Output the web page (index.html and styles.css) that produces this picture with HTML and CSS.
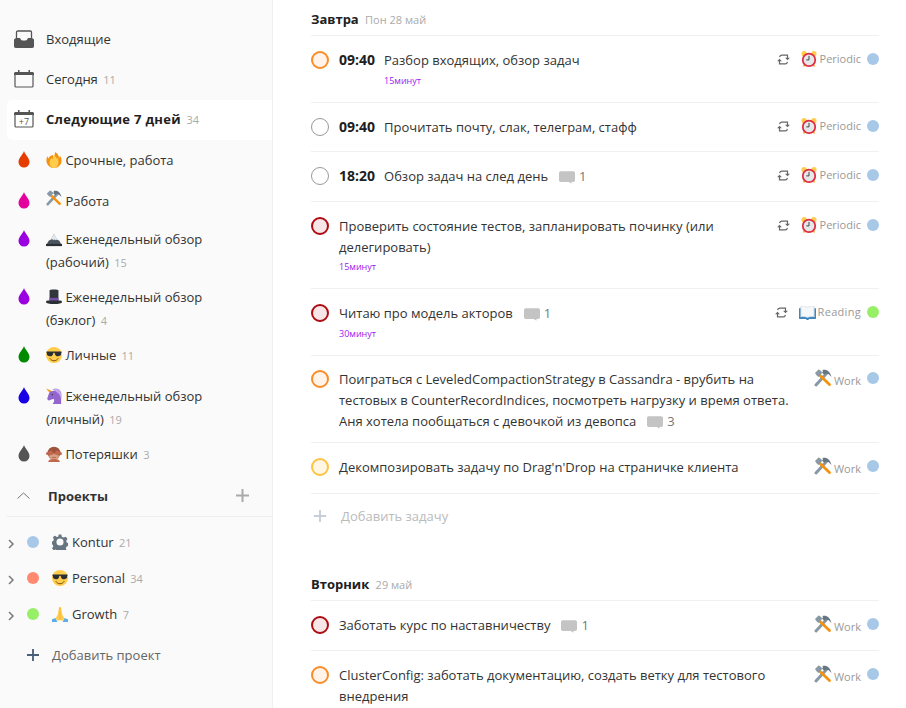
FILE: index.html
```html
<!DOCTYPE html>
<html lang="en">
  <head>
    <meta charset="UTF-8" />
    <meta name="viewport" content="width=device-width, initial-scale=1.0" />
    <title>Tasks</title>
    <link rel="stylesheet" href="styles.css">
  </head>
  <body>
    <svg class="sprite" xmlns="http://www.w3.org/2000/svg">
      <symbol id="i-inbox" viewBox="0 0 20 18"><path d="M2.500 9V2.200C2.500 1.500 3 1 3.700 1h12.600c.7 0 1.200.5 1.200 1.200V9" fill="none" stroke="#555" stroke-width="1.300"/><path d="M0 9.500 2 8h3.500c.5 0 .8.3 1 .8.4 1 1 1.700 1.800 1.700h3.400c.8 0 1.400-.7 1.800-1.700.2-.5.5-.8 1-.8H18l2 1.500v6.800c0 .9-.7 1.700-1.700 1.700H1.700C.8 18 0 17.200 0 16.300z" fill="#555"/></symbol>
      <symbol id="i-cal" viewBox="0 0 20 18"><path d="M1 5v11c0 .6.400 1 1 1h16c.6 0 1-.4 1-1V5" fill="none" stroke="#555" stroke-width="1.200"/><path d="M0 3.500C0 2.700.7 2 1.500 2H4V0h1.500v2h9V0H16v2h2.500c.8 0 1.500.7 1.500 1.500V5H0z" fill="#555"/></symbol>
      <symbol id="i-drop" viewBox="0 0 12 17"><path d="M6 0c.8 3.500 5.500 6.500 5.500 11A5.500 5.500 0 0 1 .5 11C.5 6.500 5.200 3.500 6 0z"/></symbol>
      <symbol id="i-flame" viewBox="0 0 36 36"><path d="M35 19c0-2-.5-4.500-1.500-6.500-1.500-2.500-2-4.500-2-4.500-1 2-1 4-2 5.500C29 7 25 2 20 0c1 5-1.500 8-3.500 11-1-1.500-1.500-3-1.500-5C9 9 6 12 5 15 4 13 3.500 11 4 9 1.500 11.500 1 16 1 19c0 9.400 7.600 17 17 17s17-7.600 17-17z" fill="#F4900C"/><path d="M28 24c0 6-4.500 12-10 12S8 31 8 24c0-5 3-8 4-11 1 2 2 3 3 3 0-4 2-8 5-10 0 4 3 6 5 9 2-1 2-2 2-4 1 4 1 9 1 13z" fill="#FFCC4D"/></symbol>
      <symbol id="i-tools" viewBox="0 0 36 36"><path d="M4 32 25 9" stroke="#8899A6" stroke-width="6" stroke-linecap="round" fill="none"/><path d="M17 2c7-2 15 1 18 14-4-5-7-7-11-7l-3 3-5-5 2-2z" fill="#66757F"/><path d="M10 11 31 31" stroke="#F7910B" stroke-width="5.500" stroke-linecap="round" fill="none"/><path d="M2 8l7-7c2 0 4 2 8 6l-8 9c-2-2-6-5-7-8z" fill="#8899A6"/></symbol>
      <symbol id="i-mount" viewBox="0 0 36 36"><path d="M0 33 6 22l5-3 7-12 7 12 5 3 6 11z" fill="#4B545D"/><path d="M18 6 10 20l4-2 2 3 3-2 3 2 3-2 2 2z" fill="#E1E8ED"/><path d="M0 29h36v5H0z" fill="#292F33"/></symbol>
      <symbol id="i-hat" viewBox="0 0 36 36"><path d="M8 3c0-1 4-2 10-2s10 1 10 2v23H8z" fill="#31373D"/><path d="M8 20h20v7H8z" fill="#744EAA"/><path d="M0 29c0-2 2-3 8-3h20c6 0 8 1 8 3 0 3-8 5-18 5S0 32 0 29z" fill="#292F33"/></symbol>
      <symbol id="i-cool" viewBox="0 0 36 36"><circle cx="18" cy="18" r="18" fill="#FFCC4D"/><path d="M1 11c0-1 1-1 2-1h30c1 0 2 0 2 1v2c-1 0-1 1-1 3 0 3-3 5-7 5s-7-3-7-6c0-1-1-2-2-2s-2 1-2 2c0 3-3 6-7 6s-7-2-7-5c0-2 0-3-1-3z" fill="#292F33"/><path d="M9 26c2 3 5 5 9 5s7-2 9-5" fill="none" stroke="#664500" stroke-width="2" stroke-linecap="round"/></symbol>
      <symbol id="i-unicorn" viewBox="0 0 36 36"><path d="M0 1l13 6-4 4z" fill="#F4900C"/><path d="M7 11c4-4 10-6 15-4 7 2 12 9 12 17v12H15c3-3 4-7 3-11l-6 1-5 2c-2 0-5-3-4-5z" fill="#9266CC"/><path d="M14 3c7-3 16-2 19 4 3 6 3 13 1 19-1-7-4-13-9-16-4-3-7-4-11-7z" fill="#C1A5E8"/><circle cx="14" cy="15" r="1.500" fill="#292F33"/></symbol>
      <symbol id="i-monkey" viewBox="0 0 36 36"><circle cx="18" cy="16" r="14.500" fill="#A0533C"/><circle cx="3.500" cy="17" r="3.500" fill="#C1694F"/><circle cx="32.500" cy="17" r="3.500" fill="#C1694F"/><ellipse cx="18" cy="24" rx="11" ry="7" fill="#D99E82"/><path d="M5 15c1-4 5-5 9-4l3 6c0 2-4 4-7 3-3 0-5-2-5-5zM31 15c-1-4-5-5-9-4l-3 6c0 2 4 4 7 3 3 0 5-2 5-5z" fill="#C1694F"/><path d="M13 25c3 2 7 2 10 0-1 3-9 3-10 0z" fill="#662113"/><path d="M5 36c0-5 4-7 13-7s13 2 13 7z" fill="#C1694F"/></symbol>
      <symbol id="i-gear" viewBox="0 0 36 36"><path d="M15 1h6l1 5 4 2 5-2 4 5-3 4 1 4 4 2v6l-4 1-2 4 2 5-5 3-4-3-4 1-1 3h-6l-1-4-4-2-4 2-4-5 3-4-1-4-4-1v-6l5-1 1-4-2-5 5-3 4 3 3-1z" fill="#66757F"/><circle cx="18" cy="18" r="8" fill="#fafafa"/></symbol>
      <symbol id="i-pray" viewBox="0 0 36 36"><path d="M0 36v-6l8-3 4 9zM36 36v-6l-8-3-4 9z" fill="#5DADEC"/><path d="M16 3c1-2 2-2 2 0v28l-5 3-5-6 5-9zM20 3c-1-2-2-2-2 0v28l5 3 5-6-5-9z" fill="#FFCC4D"/><path d="M18 4v28" stroke="#F4900C" stroke-width=".8"/></symbol>
      <symbol id="i-clock" viewBox="0 0 36 36"><circle cx="7" cy="6" r="6" fill="#FFCC4D"/><circle cx="29" cy="6" r="6" fill="#FFCC4D"/><path d="M6 30l-2 5h5l2-4zM30 30l2 5h-5l-2-4z" fill="#FFAC33"/><circle cx="18" cy="20" r="14" fill="#E6E7E8" stroke="#DD2E44" stroke-width="4"/><path d="M18 11v9h-6" fill="none" stroke="#414042" stroke-width="2.200"/></symbol>
      <symbol id="i-book" viewBox="0 0 36 36"><path d="M0 9h36v21c0 1-1 2-2 2H21l-1 2h-4l-1-2H2c-1 0-2-1-2-2z" fill="#3B88C3"/><path d="M3 5c5-1 11-1 15 2 4-3 10-3 15-2v23c-5-1-11-1-15 1-4-2-10-2-15-1z" fill="#CCD6DD"/><path d="M5 5c5-1 9 0 13 3v20c-4-2-8-3-13-2zM31 5c-5-1-9 0-13 3v20c4-2 8-3 13-2z" fill="#F5F8FA"/></symbol>
      <symbol id="i-comment" viewBox="0 0 18 14"><path d="M2 0h14c1 0 2 1 2 2v8c0 1-1 2-2 2h-2v2l-3-2H2c-1 0-2-1-2-2V2C0 1 1 0 2 0z"/></symbol>
      <symbol id="i-repeat" viewBox="0 0 13 13"><path d="M2.600 4.200C2.800 3 3.400 2.200 4.600 2.200h5.900V5" fill="none" stroke="#666" stroke-width="1.200"/><path d="M8.100 4.700h4.800l-2.400 2.600z" fill="#666"/><path d="M10.400 8.800C10.200 10 9.600 10.800 8.400 10.800H2.500V8" fill="none" stroke="#666" stroke-width="1.200"/><path d="M.1 8.300h4.800L2.500 5.700z" fill="#666"/></symbol>
      <symbol id="i-plus" viewBox="0 0 13 13"><path d="M5.500 0h2v5.500H13v2H7.500V13h-2V7.500H0v-2h5.500z"/></symbol>
    </svg>

    <div class="app">
      <aside class="sidebar">
        <nav class="filters">
          <a class="nav-item"><svg class="nav-icon"><use href="#i-inbox"/></svg><span>Входящие</span></a>
          <a class="nav-item"><svg class="nav-icon"><use href="#i-cal"/></svg><span>Сегодня <small>11</small></span></a>
          <a class="nav-item active">
            <span class="cal7"><svg class="nav-icon"><use href="#i-cal"/></svg><em>+7</em></span>
            <span>Следующие 7 дней <small>34</small></span>
          </a>

          <a class="label-item first"><svg class="drop drop-red"><use href="#i-drop"/></svg><span><svg class="emoji"><use href="#i-flame"/></svg> Срочные, работа</span></a>
          <a class="label-item second"><svg class="drop drop-pink"><use href="#i-drop"/></svg><span><svg class="emoji raised"><use href="#i-tools"/></svg> Работа</span></a>
          <a class="label-item"><svg class="drop drop-purple"><use href="#i-drop"/></svg><div><div><svg class="emoji"><use href="#i-mount"/></svg> Еженедельный обзор</div><div>(рабочий) <small>15</small></div></div></a>
          <a class="label-item"><svg class="drop drop-purple"><use href="#i-drop"/></svg><div><div><svg class="emoji"><use href="#i-hat"/></svg> Еженедельный обзор</div><div>(бэклог) <small>4</small></div></div></a>
          <a class="label-item"><svg class="drop drop-green"><use href="#i-drop"/></svg><span><svg class="emoji"><use href="#i-cool"/></svg> Личные <small>11</small></span></a>
          <a class="label-item"><svg class="drop drop-blue"><use href="#i-drop"/></svg><div><div><svg class="emoji"><use href="#i-unicorn"/></svg> Еженедельный обзор</div><div>(личный) <small>19</small></div></div></a>
          <a class="label-item"><svg class="drop drop-gray"><use href="#i-drop"/></svg><span><svg class="emoji"><use href="#i-monkey"/></svg> Потеряшки <small>3</small></span></a>
        </nav>

        <div class="projects-head">
          <svg class="chevron-up" viewBox="0 0 13 7"><path d="M.5 6.500 6.500 1l6 5.500" fill="none" stroke="#777" stroke-width="1"/></svg>
          <strong>Проекты</strong>
          <svg class="head-plus"><use href="#i-plus"/></svg>
        </div>

        <div class="project"><svg class="chevron-right" viewBox="0 0 6 10"><path d="M1 1l4 4-4 4" fill="none" stroke="#777" stroke-width="1.500"/></svg><i class="dot dot-blue"></i><svg class="emoji"><use href="#i-gear"/></svg><span>Kontur <small>21</small></span></div>
        <div class="project"><svg class="chevron-right" viewBox="0 0 6 10"><path d="M1 1l4 4-4 4" fill="none" stroke="#777" stroke-width="1.500"/></svg><i class="dot dot-red"></i><svg class="emoji"><use href="#i-cool"/></svg><span>Personal <small>34</small></span></div>
        <div class="project"><svg class="chevron-right" viewBox="0 0 6 10"><path d="M1 1l4 4-4 4" fill="none" stroke="#777" stroke-width="1.500"/></svg><i class="dot dot-green"></i><svg class="emoji"><use href="#i-pray"/></svg><span>Growth <small>7</small></span></div>

        <a class="add-project"><svg class="add-plus"><use href="#i-plus"/></svg><span>Добавить проект</span></a>
      </aside>

      <main class="content">
        <h2 class="day-head">Завтра <small>Пон 28 май</small></h2>

        <div class="task">
          <span class="check check-orange"></span>
          <div class="task-body">
            <p><b>09:40</b>Разбор входящих, обзор задач</p>
            <div class="duration indent">15минут</div>
          </div>
          <div class="task-meta"><svg class="repeat"><use href="#i-repeat"/></svg><svg class="emoji meta-emoji"><use href="#i-clock"/></svg><span class="tag">Periodic</span><i class="dot dot-blue"></i></div>
        </div>

        <div class="task">
          <span class="check"></span>
          <div class="task-body"><p><b>09:40</b>Прочитать почту, слак, телеграм, стафф</p></div>
          <div class="task-meta"><svg class="repeat"><use href="#i-repeat"/></svg><svg class="emoji meta-emoji"><use href="#i-clock"/></svg><span class="tag">Periodic</span><i class="dot dot-blue"></i></div>
        </div>

        <div class="task task-50">
          <span class="check"></span>
          <div class="task-body"><p><b>18:20</b>Обзор задач на след день<span class="comments"><svg class="comment"><use href="#i-comment"/></svg>1</span></p></div>
          <div class="task-meta"><svg class="repeat"><use href="#i-repeat"/></svg><svg class="emoji meta-emoji"><use href="#i-clock"/></svg><span class="tag">Periodic</span><i class="dot dot-blue"></i></div>
        </div>

        <div class="task task-tight">
          <span class="check check-dark"></span>
          <div class="task-body">
            <p>Проверить состояние тестов, запланировать починку (или делегировать)</p>
            <div class="duration">15минут</div>
          </div>
          <div class="task-meta"><svg class="repeat"><use href="#i-repeat"/></svg><svg class="emoji meta-emoji"><use href="#i-clock"/></svg><span class="tag">Periodic</span><i class="dot dot-blue"></i></div>
        </div>

        <div class="task">
          <span class="check check-dark"></span>
          <div class="task-body">
            <p>Читаю про модель акторов<span class="comments"><svg class="comment"><use href="#i-comment"/></svg>1</span></p>
            <div class="duration">30минут</div>
          </div>
          <div class="task-meta"><svg class="repeat"><use href="#i-repeat"/></svg><svg class="emoji book-emoji"><use href="#i-book"/></svg><span class="tag tag-reading">Reading</span><i class="dot dot-green"></i></div>
        </div>

        <div class="task task-long">
          <span class="check check-orange"></span>
          <div class="task-body">
            <p>Поиграться с LeveledCompactionStrategy в Cassandra - врубить на тестовых в CounterRecordIndices, посмотреть нагрузку и время ответа. Аня хотела пообщаться с девочкой из девопса<span class="comments"><svg class="comment"><use href="#i-comment"/></svg>3</span></p>
          </div>
          <div class="task-meta meta-work"><svg class="emoji tool-emoji"><use href="#i-tools"/></svg><span class="tag">Work</span><i class="dot dot-blue"></i></div>
        </div>

        <div class="task task-51">
          <span class="check check-yellow"></span>
          <div class="task-body"><p>Декомпозировать задачу по Drag'n'Drop на страничке клиента</p></div>
          <div class="task-meta meta-work"><svg class="emoji tool-emoji"><use href="#i-tools"/></svg><span class="tag">Work</span><i class="dot dot-blue"></i></div>
        </div>

        <a class="add-task"><svg class="add-task-plus"><use href="#i-plus"/></svg>Добавить задачу</a>

        <h2 class="day-head day-next">Вторник <small>29 май</small></h2>

        <div class="task task-50">
          <span class="check check-dark"></span>
          <div class="task-body"><p>Заботать курс по наставничеству<span class="comments"><svg class="comment"><use href="#i-comment"/></svg>1</span></p></div>
          <div class="task-meta meta-work"><svg class="emoji tool-emoji"><use href="#i-tools"/></svg><span class="tag">Work</span><i class="dot dot-blue"></i></div>
        </div>

        <div class="task">
          <span class="check check-orange"></span>
          <div class="task-body"><p>ClusterConfig: заботать документацию, создать ветку для тестового внедрения</p></div>
          <div class="task-meta meta-work"><svg class="emoji tool-emoji"><use href="#i-tools"/></svg><span class="tag">Work</span><i class="dot dot-blue"></i></div>
        </div>
      </main>
    </div>
  </body>
</html>
```

FILE: styles.css
```css
* {
  margin: 0;
  padding: 0;
  box-sizing: border-box;
}

html,
body {
  height: 100%;
  overflow: hidden;
}

body {
  font-family: "Open Sans", "Noto Sans", sans-serif;
  font-size: 13px;
  color: #333;
  background: #fff;
}

.sprite {
  display: none;
}

.app {
  display: flex;
  height: 708px;
  overflow: hidden;
}

small {
  font-size: 11px;
  color: #aaa;
  margin-left: 2px;
}

/* sidebar */
.sidebar {
  width: 273px;
  flex: none;
  padding: 20px 0 0 7px;
  background: #fafafa;
  border-right: 1px solid #f0f0f0;
}

.nav-item {
  display: flex;
  align-items: center;
  height: 40px;
  padding: 0 0 2px 7px;
}

.nav-icon {
  width: 20px;
  height: 18px;
  display: block;
}

.nav-item > svg,
.cal7 {
  margin-right: 12px;
  flex: none;
}

.cal7 {
  display: flex;
  align-items: center;
  justify-content: center;
  width: 20px;
  height: 18px;
}

.cal7 .nav-icon {
  flex: none;
}

.cal7 em {
  font-style: normal;
  font-size: 9px;
  line-height: 10px;
  color: #555;
  margin: 5px 0 0 -20px;
  width: 20px;
  flex: none;
  text-align: center;
}

.active {
  background: #fff;
  border-radius: 5px 0 0 5px;
}

.active span:last-child {
  font-weight: 700;
  color: #222;
  letter-spacing: 0.3px;
}

.active small {
  font-weight: 400;
  letter-spacing: 0;
}

.label-item {
  display: flex;
  min-height: 41px;
  padding: 7px 50px 5px 11px;
  line-height: 23px;
}

.label-item.first {
  height: 40px;
  min-height: 0;
  padding-top: 9px;
  padding-bottom: 8px;
}

.label-item.second {
  padding-top: 10px;
  padding-bottom: 8px;
}

.drop {
  width: 12px;
  height: 17px;
  flex: none;
  margin: 2px 16px 0 0;
}

.drop-red { fill: #e63c00; }
.drop-pink { fill: #e3009c; }
.drop-purple { fill: #9a00e0; }
.drop-green { fill: #008a00; }
.drop-blue { fill: #1a00e6; }
.drop-gray { fill: #555; }

.emoji {
  width: 16px;
  height: 16px;
  vertical-align: -3px;
}

.raised {
  vertical-align: 0;
}

.projects-head {
  display: flex;
  align-items: center;
  height: 40px;
  padding: 0 0 2px 10px;
  border-bottom: 1px solid #eee;
}

.projects-head strong {
  flex: 1;
  color: #333;
  padding-left: 14px;
}

.chevron-up {
  width: 13px;
  height: 7px;
  flex: none;
  margin-right: 4px;
}

.head-plus {
  width: 13px;
  height: 13px;
  fill: #aaa;
  margin-right: 23px;
}

.project {
  display: flex;
  align-items: center;
  height: 36px;
}

.projects-head + .project {
  margin-top: 7px;
}

.chevron-right {
  width: 6px;
  height: 10px;
  flex: none;
  margin: 3px 13px 0 1px;
}

.dot {
  display: block;
  width: 12px;
  height: 12px;
  border-radius: 50%;
  flex: none;
}

.dot-blue { background: #a8c8e8; }
.dot-red { background: #ff8a70; }
.dot-green { background: #96ef66; }

.project .emoji {
  margin: 0 4px 0 13px;
}

.add-project {
  display: flex;
  align-items: center;
  height: 40px;
  margin-top: 3px;
  padding-left: 20px;
  color: #666;
}

.add-plus {
  width: 12px;
  height: 12px;
  fill: #4a6078;
  margin-right: 13px;
}

/* main list */
.content {
  width: 568px;
  margin-left: 38px;
  flex: none;
}

.day-head {
  height: 36px;
  padding-top: 10px;
  font-size: 13px;
  line-height: 18px;
  font-weight: 700;
  color: #202020;
  border-bottom: 1px solid #f0f0f0;
}

.day-head small {
  font-weight: 400;
  margin-left: 3px;
}

.day-next {
  height: 64px;
  padding-top: 38px;
}

.task {
  display: flex;
  min-height: 49px;
  padding: 14px 0 9px;
  border-bottom: 1px solid #f0f0f0;
  line-height: 21px;
}

.task-50 {
  min-height: 50px;
}

.task-51 {
  min-height: 51px;
}

.task-long {
  padding: 13px 0 10px;
}

.task-tight p {
  line-height: 20.5px;
}

.check {
  display: block;
  flex: none;
  width: 18px;
  height: 18px;
  margin: 1px 10px 0 0;
  border-radius: 50%;
  border: 1px solid #999;
  background: #fff;
}

.check-orange {
  border: 2px solid #fb8c26;
  background: #fff3ea;
}

.check-dark {
  border: 2px solid #b00a12;
  background: #f6e6e8;
}

.check-yellow {
  border: 2px solid #fdc341;
  background: #fff6e3;
}

.task-body {
  flex: 1;
  min-width: 0;
}

.task-body b {
  font-size: 14px;
  line-height: 1;
  font-weight: 700;
  color: #202020;
  margin-right: 9px;
}

.comments {
  margin-left: 11px;
  color: #777;
}

.comment {
  width: 16px;
  height: 13px;
  fill: #c4c4c4;
  margin-right: 4px;
  vertical-align: -3px;
}

.duration {
  font-size: 9px;
  line-height: 12px;
  margin: 4px 0 6px;
  color: #a020f0;
}

.indent {
  margin-left: 45px;
}

.task-meta {
  display: flex;
  align-items: center;
  align-self: flex-start;
  flex: none;
  height: 18px;
  margin-left: 12px;
}

.repeat {
  width: 13px;
  height: 13px;
  margin-right: 11px;
}

.meta-emoji {
  width: 16px;
  height: 16px;
  margin-right: 3px;
}

.book-emoji {
  width: 17px;
  height: 17px;
  margin-right: 2px;
}

.tool-emoji {
  width: 18px;
  height: 18px;
  margin-right: 2px;
}

.tag {
  font-size: 11px;
  color: #999;
  margin: -2px 6px 0 0;
}

.tag-reading {
  letter-spacing: 0.3px;
}

.meta-work .tag {
  margin-top: 0;
  padding-top: 5px;
}

.add-task {
  display: flex;
  align-items: center;
  height: 43px;
  color: #bbb;
}

.add-task-plus {
  width: 12px;
  height: 12px;
  fill: #c8ced6;
  margin: 0 15px 0 3px;
}
```
